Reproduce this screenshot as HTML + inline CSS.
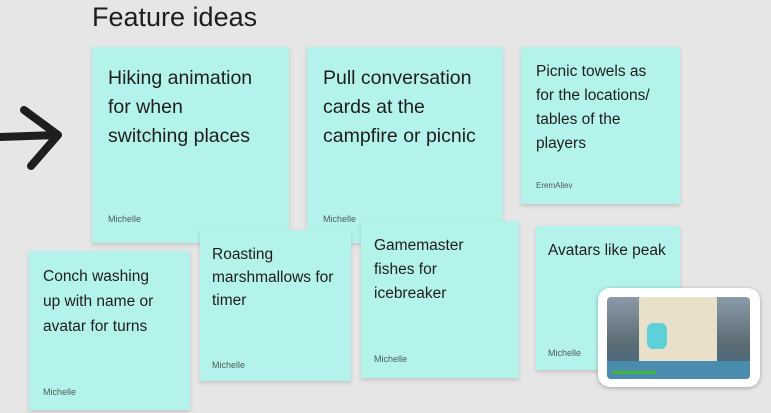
<!DOCTYPE html>
<html><head><style>
body{margin:0;width:771px;height:413px;background:#e6e6e6;position:relative;overflow:hidden;font-family:"Liberation Sans",sans-serif;color:#1e1e1e}
.n{position:absolute;background:#b4f2ec;box-shadow:0 2px 4px rgba(0,0,0,.15)}
.t{position:absolute;left:16px;top:17px}
.a{position:absolute;left:16px;font-size:9px;color:#4d5c5a}
h1{position:absolute;left:92px;top:2px;margin:0;font-weight:400;font-size:27px;color:#1e1e1e}
</style></head><body>
<h1>Feature ideas</h1>
<svg style="position:absolute;left:0;top:100px" width="70" height="80"><path d="M0 37 L57 35 M24 10 L58 35 L31 66" stroke="#1e1e1e" stroke-width="8" fill="none" stroke-linecap="round" stroke-linejoin="round"/></svg>
<div class="n" style="left:92px;top:47px;width:197px;height:196px"><div class="t" style="width:160px;font-size:19.5px;line-height:29px">Hiking animation for when switching places</div><div class="a" style="top:167px">Michelle</div></div>
<div class="n" style="left:307px;top:47px;width:196px;height:196px"><div class="t" style="width:162px;font-size:19.5px;line-height:29px">Pull conversation cards at the campfire or picnic</div><div class="a" style="top:167px">Michelle</div></div>
<div class="n" style="left:521px;top:47px;width:159px;height:157px"><div class="t" style="width:122px;left:15px;top:13px;font-size:15.5px;line-height:24px">Picnic towels as for the locations/ tables of the players</div><div class="a" style="left:15px;top:134px;font-size:8px">EremAliev</div></div>
<div class="n" style="left:29px;top:251px;width:161px;height:159px"><div class="t" style="width:122px;left:14px;top:13px;font-size:15.5px;line-height:25px">Conch washing up with name or avatar for turns</div><div class="a" style="left:14px;top:136px">Michelle</div></div>
<div class="n" style="left:200px;top:230px;width:151px;height:151px"><div class="t" style="width:128px;left:12px;top:13px;font-size:15.5px;line-height:23px">Roasting marshmallows for timer</div><div class="a" style="left:12px;top:130px">Michelle</div></div>
<div class="n" style="left:361px;top:221px;width:158px;height:157px"><div class="t" style="width:104px;left:13px;top:13px;font-size:15.5px;line-height:24px">Gamemaster fishes for icebreaker</div><div class="a" style="left:13px;top:133px">Michelle</div></div>
<div class="n" style="left:536px;top:226px;width:144px;height:144px"><div class="t" style="width:125px;left:12px;top:13px;font-size:15.5px;line-height:24px">Avatars like peak</div><div class="a" style="left:12px;top:122px">Michelle</div></div>
<div style="position:absolute;left:598px;top:288px;width:162px;height:99px;background:#fff;border-radius:12px;box-shadow:0 1px 4px rgba(0,0,0,.3)">
<div style="position:absolute;left:9px;top:9px;width:143px;height:82px;border-radius:4px;background:linear-gradient(#8a9aa8,#5a6a72 60%,#3a6a88);overflow:hidden">
<div style="position:absolute;left:32px;top:0;width:78px;height:64px;background:#e8e0c8"></div>
<div style="position:absolute;left:40px;top:26px;width:20px;height:26px;background:#5dd0d8;border-radius:6px"></div>
<div style="position:absolute;left:0;bottom:0;width:100%;height:18px;background:#4a8cae"></div>
<div style="position:absolute;left:5px;bottom:5px;width:44px;height:3px;background:#3fb83a"></div>
</div></div>
</body></html>
